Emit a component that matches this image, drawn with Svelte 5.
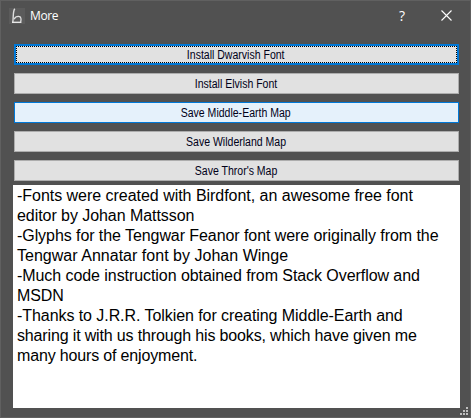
<script>
  const actions = [
    { label: 'Install Dwarvish Font', state: 'focused' },
    { label: 'Install Elvish Font', state: '' },
    { label: 'Save Middle-Earth Map', state: 'hovered' },
    { label: 'Save Wilderland Map', state: '' },
    { label: "Save Thror's Map", state: '' }
  ];
  const credits = [
    { text: '-Fonts were created with Birdfont, an awesome free font', tracking: -0.03 },
    { text: 'editor by Johan Mattsson', tracking: -0.06 },
    { text: '-Glyphs for the Tengwar Feanor font were originally from the', tracking: -0.07 },
    { text: 'Tengwar Annatar font by Johan Winge', tracking: 0.02 },
    { text: '-Much code instruction obtained from Stack Overflow and', tracking: -0.065 },
    { text: 'MSDN', tracking: -0.1 },
    { text: '-Thanks to J.R.R. Tolkien for creating Middle-Earth and', tracking: -0.065 },
    { text: 'sharing it with us through his books, which have given me', tracking: -0.15 },
    { text: 'many hours of enjoyment.', tracking: -0.16 }
  ];
</script>

<div class="window">
  <header>
    <svg class="logo" width="16" height="16" viewBox="0 0 16 16">
      <rect width="16" height="16" fill="#5b5b5b" />
      <path d="M5.8 .8C3.8 3 4.6 8 3.8 14.3" fill="none" stroke="#dedede" stroke-width="1.4" />
      <path d="M3 14.3H12.4" fill="none" stroke="#f0f0f0" stroke-width="1.3" />
      <path d="M11.6 14C12.6 11 11.8 8.5 10 8.5C8 8.3 6 9.5 5.1 11.3" fill="none" stroke="#dedede" stroke-width="1.3" />
    </svg>
    <span class="title">More</span>
    <span class="help">?</span>
    <svg class="close" width="11" height="11" viewBox="0 0 11 11">
      <path d="M.5 .5L10.5 10.5M10.5 .5L.5 10.5" stroke="#fff" stroke-width="1.1" />
    </svg>
  </header>
  <main>
    <div class="actions">
      {#each actions as action}
        <button class={action.state}>
          <span class="face"><span class="label">{action.label}</span></span>
        </button>
      {/each}
    </div>
    <div class="credits">
      {#each credits as line}
        <div style="letter-spacing: {line.tracking}px">{line.text}</div>
      {/each}
    </div>
  </main>
  <svg class="grip" width="8" height="8" viewBox="0 0 8 8" fill="#bfbfbf">
    <path d="M6 0h2v2h-2zM3 3h2v2h-2zM6 3h2v2h-2zM0 6h2v2h-2zM3 6h2v2h-2zM6 6h2v2h-2z" />
  </svg>
</div>

<style>
  .window {
    position: relative;
    box-sizing: border-box;
    width: 471px;
    height: 418px;
    border: 1px solid #606060;
    background: #515151;
    overflow: hidden;
    font-family: "Liberation Sans", Arial, sans-serif;
  }
  header {
    display: flex;
    align-items: center;
    height: 29px;
    padding: 0 18px 0 8px;
    color: #fff;
    font: 12px/29px "Open Sans", "Noto Sans", sans-serif;
  }
  .title { margin-left: 5px; flex: 1; letter-spacing: -0.4px; }
  .help { width: 8px; text-align: center; font-size: 14px; }
  .close { margin-left: 35px; }
  main { padding: 14px 10px 0 12px; }
  .actions {
    display: flex;
    flex-direction: column;
    gap: 8px;
    padding: 0 1px;
  }
  button {
    display: flex;
    box-sizing: border-box;
    width: 100%;
    height: 21px;
    margin: 0;
    padding: 1px;
    border: 1px solid #adadad;
    background: #e1e1e1;
    color: #000018;
    font: 12px/18px "Liberation Sans", Arial, sans-serif;
  }
  .face {
    display: flex;
    justify-content: center;
    box-sizing: border-box;
    width: 100%;
    height: 17px;
    padding-right: 1px;
  }
  .label { transform: scaleX(0.877); }
  .hovered { border-color: #0078d7; background: #e5f1fb; }
  .focused { border: 2px solid #0078d7; padding: 0; }
  .focused .face {
    background:
      repeating-linear-gradient(90deg, #000 0 1px, transparent 1px 2px) 0 0 / 100% 1px no-repeat,
      repeating-linear-gradient(90deg, #000 0 1px, transparent 1px 2px) 0 100% / 100% 1px no-repeat,
      repeating-linear-gradient(#000 0 1px, transparent 1px 2px) 0 0 / 1px 100% no-repeat,
      repeating-linear-gradient(#000 0 1px, transparent 1px 2px) 100% 0 / 1px 100% no-repeat;
  }
  .credits {
    box-sizing: border-box;
    height: 223px;
    margin-top: 4px;
    padding: 1px 4px;
    background: #fff;
    color: #000;
    font-size: 16px;
    line-height: 20px;
    white-space: nowrap;
  }
  .grip { position: absolute; right: 2px; bottom: 2px; }
</style>
